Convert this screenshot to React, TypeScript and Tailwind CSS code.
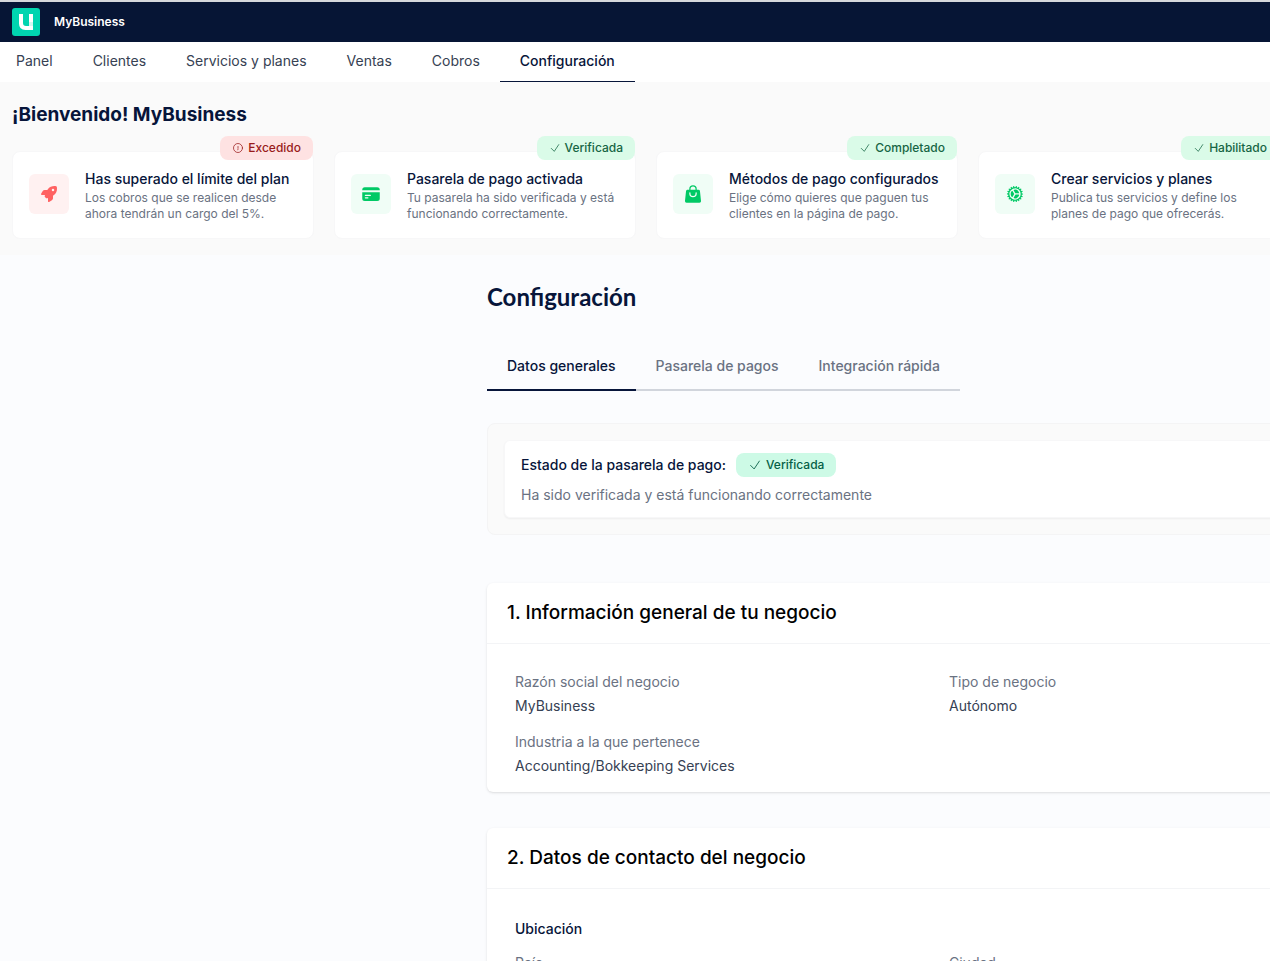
import { ReactNode } from "react";
import { FaRocket } from "react-icons/fa6";
import {
  HiCreditCard,
  HiShoppingBag,
  HiCog,
  HiOutlineCheck,
  HiOutlineExclamationCircle,
} from "react-icons/hi2";

const navItems = ["Panel", "Clientes", "Servicios y planes", "Ventas", "Cobros", "Configuración"];

const tabs = ["Datos generales", "Pasarela de pagos", "Integración rápida"];

const cards = [
  {
    title: "Has superado el límite del plan",
    text: "Los cobros que se realicen desde ahora tendrán un cargo del 5%.",
    badge: "Excedido",
    icon: <FaRocket className="size-4" />,
    ok: false,
  },
  {
    title: "Pasarela de pago activada",
    text: "Tu pasarela ha sido verificada y está funcionando correctamente.",
    badge: "Verificada",
    icon: <HiCreditCard />,
    ok: true,
  },
  {
    title: "Métodos de pago configurados",
    text: "Elige cómo quieres que paguen tus clientes en la página de pago.",
    badge: "Completado",
    icon: <HiShoppingBag />,
    ok: true,
  },
  {
    title: "Crear servicios y planes",
    text: "Publica tus servicios y define los planes de pago que ofrecerás.",
    badge: "Habilitado",
    icon: <HiCog />,
    ok: true,
  },
];

function Logo() {
  return (
    <svg viewBox="0 0 28 28" className="w-7 h-7" aria-hidden="true">
      <rect width="28" height="28" rx="3" fill="#00d5b0" />
      <path d="M7 6h4v9q0 3 3 3h3V6h4v16h-7.500q-6.500 0-6.500-6.500z" fill="#fff" />
      <path d="M17 14h4v4h-4z" fill="#d5f8f1" />
    </svg>
  );
}

function StatusCard({ title, text, badge, icon, ok }: (typeof cards)[number]) {
  return (
    <div className="relative flex w-[302px] shrink-0 gap-4 rounded-lg border border-[#f7f7f8] bg-white px-4 pt-[17px] pb-4">
      <span
        className={
          ok
            ? "absolute right-0 -top-4 flex h-6 items-center gap-1 rounded-lg bg-[#dafbe8] px-3 text-xs font-medium text-[#166544]"
            : "absolute right-0 -top-4 flex h-6 items-center gap-1 rounded-lg bg-[#fee2e2] px-3 text-xs font-medium text-[#991b1b]"
        }
      >
        {ok ? <HiOutlineCheck className="size-3" /> : <HiOutlineExclamationCircle className="size-3" />}
        {badge}
      </span>
      <div
        className={
          ok
            ? "mt-[5px] flex size-10 shrink-0 items-center justify-center rounded-md bg-[#f0fdf6] text-xl text-[#00c965]"
            : "mt-[5px] flex size-10 shrink-0 items-center justify-center rounded-md bg-[#fff1f1] text-xl text-[#ff6262]"
        }
      >
        {icon}
      </div>
      <div className="min-w-0">
        <h3 className="whitespace-nowrap text-sm font-medium text-[#07153a]">{title}</h3>
        <p className="mt-px text-xs leading-4 text-gray-500">{text}</p>
      </div>
    </div>
  );
}

function Section({ title, children }: { title: string; children: ReactNode }) {
  return (
    <section className="rounded-md bg-white shadow-sm">
      <h2 className="border-b border-gray-100 px-5 py-4 text-[19px] leading-7 font-medium text-black">{title}</h2>
      <div className="px-7 pt-[26px] pb-[14px]">{children}</div>
    </section>
  );
}

function Field({ label, value }: { label: string; value: string }) {
  return (
    <div>
      <dt className="text-sm leading-6 text-gray-500">{label}</dt>
      <dd className="text-sm leading-6 text-gray-700">{value}</dd>
    </div>
  );
}

export default function App() {
  return (
    <div className="h-screen overflow-hidden bg-[#fbfcfe] font-['Inter',sans-serif] text-[#07153a]">
      <header className="flex h-[42px] items-center gap-[14px] border-t-2 border-[#d5d8dc] bg-[#061535] px-3">
        <Logo />
        <span className="text-xs font-semibold text-white">MyBusiness</span>
      </header>

      <nav className="flex h-10 bg-white">
        {navItems.map((item) => (
          <a
            key={item}
            href="#"
            className={
              item === "Configuración"
                ? "border-b border-[#07153a] px-5 pt-[9px] text-sm font-medium first:pl-4"
                : "px-5 pt-[9px] text-sm text-gray-700 first:pl-4"
            }
          >
            {item}
          </a>
        ))}
      </nav>

      <div className="bg-[#fafafa] px-3 pt-[19px] pb-4">
        <h1 className="text-[19px] leading-7 font-bold">¡Bienvenido! MyBusiness</h1>
        <div className="mt-[22px] flex gap-5">
          {cards.map((card) => (
            <StatusCard key={card.title} {...card} />
          ))}
        </div>
      </div>

      <main className="ml-[487px] w-4xl pt-[26px]">
        <h1 className="font-['Lato',sans-serif] text-2xl font-bold">Configuración</h1>

        <div className="mt-[27px] flex w-max">
          {tabs.map((tab, i) => (
            <button
              key={tab}
              className={
                i === 0
                  ? "border-b-2 border-[#07153a] px-5 pt-4 pb-[13px] text-sm font-medium"
                  : "border-b-2 border-gray-300 px-5 pt-4 pb-[13px] text-sm font-medium text-gray-500"
              }
            >
              {tab}
            </button>
          ))}
        </div>

        <div className="mt-8 rounded-lg border border-[#f4f4f5] bg-[#fafafa] p-4">
          <div className="rounded-md border border-[#f7f7f8] bg-white px-4 py-3 shadow-xs">
            <div className="flex items-center gap-2.5">
              <h2 className="text-sm font-medium">Estado de la pasarela de pago:</h2>
              <span className="flex h-6 items-center gap-1 rounded-lg bg-[#cdfae6] px-3 text-xs font-medium text-[#065f46]">
                <HiOutlineCheck className="size-[14px]" />
                Verificada
              </span>
            </div>
            <p className="mt-2 text-sm text-gray-500">Ha sido verificada y está funcionando correctamente</p>
          </div>
        </div>

        <div className="mt-12 flex flex-col gap-9">
          <Section title="1. Información general de tu negocio">
            <dl className="grid grid-cols-2 gap-x-7 gap-y-3">
              <Field label="Razón social del negocio" value="MyBusiness" />
              <Field label="Tipo de negocio" value="Autónomo" />
              <Field label="Industria a la que pertenece" value="Accounting/Bokkeeping Services" />
            </dl>
          </Section>

          <Section title="2. Datos de contacto del negocio">
            <h3 className="text-sm leading-7 font-medium">Ubicación</h3>
            <dl className="mt-2 grid grid-cols-2 gap-x-7 gap-y-3">
              <Field label="País" value="España" />
              <Field label="Ciudad" value="Madrid" />
            </dl>
          </Section>
        </div>
      </main>
    </div>
  );
}
